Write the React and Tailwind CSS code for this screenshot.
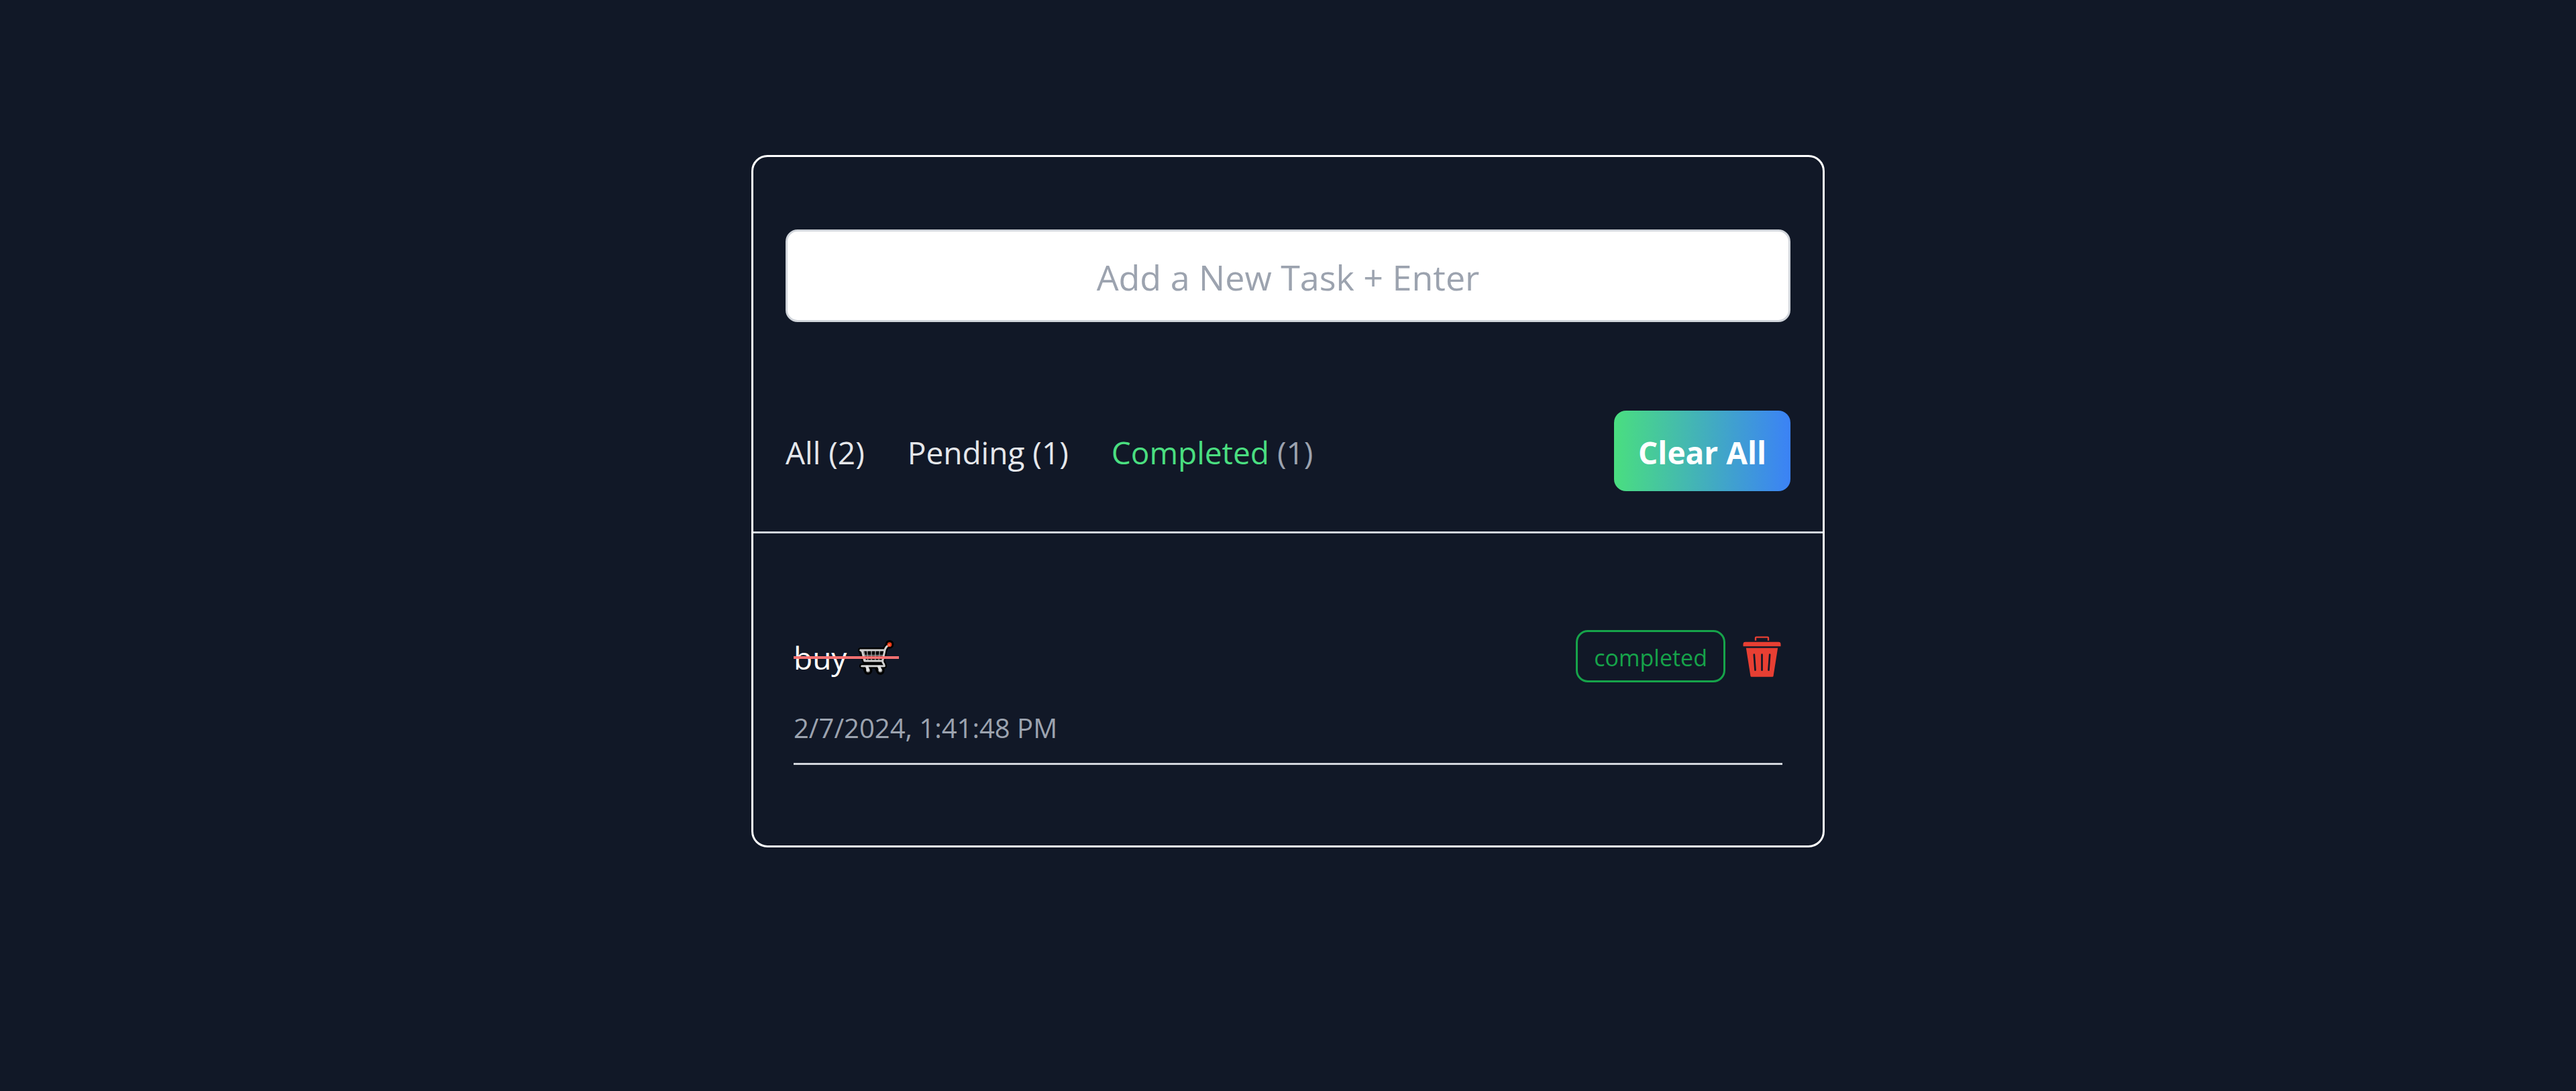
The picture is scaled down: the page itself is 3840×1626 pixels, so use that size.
import { useState } from "react";

function CartIcon() {
  const frame =
    "M200 71 Q187 77 183 93 L173 141 Q172 146 179 156 L181 164 H80 M74 93 H183 M74 93 L82 98 L92 141 H173";
  return (
    <svg
      viewBox="60 44 168 164"
      className="h-14 w-14"
      fill="none"
      strokeLinecap="round"
      strokeLinejoin="round"
      role="img"
      aria-label="shopping cart"
    >
      <g stroke="#000" strokeWidth="22">
        <path d={frame} />
        <path d="M76 95 L92 141 H173 L183 93 Z" fill="#000" />
        <path d="M204 67 H204.1" strokeWidth="38" />
        <path d="M103 170 L108 184 M157 170 L163 184" strokeWidth="38" />
      </g>
      <path
        d="M89 98 L97 137 M104 97 L107 137 M123 97 V137 M141 97 L140 137 M160 97 L156 137 M85 116 H176"
        stroke="#a3a3a3"
        strokeWidth="4"
      />
      <path d={frame} stroke="#cfcfcf" strokeWidth="9" />
      <path d="M103 168 L108 180 M157 168 L163 180" stroke="#e2e2e2" strokeWidth="13" />
      <circle cx="108" cy="184" r="9" fill="#8a8a8a" />
      <circle cx="163" cy="184" r="9" fill="#8a8a8a" />
      <circle cx="107" cy="181" r="7" fill="#e6e6e6" />
      <circle cx="162" cy="181" r="7" fill="#e6e6e6" />
      <circle cx="204" cy="68" r="10" fill="#f03a17" />
      <circle cx="202" cy="70" r="4" fill="#ff8a70" />
    </svg>
  );
}

function TrashIcon() {
  return (
    <svg viewBox="56 52 170 183" className="h-[61px] w-[57px]" aria-hidden="true">
      <path d="M112.500 72 V60 Q112.500 57 116 57 H166 Q169.500 57 169.500 60 V72" fill="none" stroke="#e83f33" strokeWidth="7" />
      <path d="M57 98 V88 Q57 78 67 78 H215 Q225 78 225 88 V98 Z" fill="#e83f33" />
      <path d="M70 105 H212 L192 231 Q191 234 188 234 H94 Q91 234 90 231 Z" fill="#e83f33" />
      <path d="M106 135 L111 204 M141 135 V204 M176 135 L171 204" stroke="#111827" strokeWidth="8" strokeLinecap="round" />
    </svg>
  );
}

const filters = [
  { id: "all", label: "All", count: 2 },
  { id: "pending", label: "Pending", count: 1 },
  { id: "completed", label: "Completed", count: 1 },
];

function Filters({ active, onSelect }) {
  return (
    <nav className="flex gap-16 pt-1">
      {filters.map(({ id, label, count }) => (
        <button
          key={id}
          type="button"
          onClick={() => onSelect(id)}
          className={
            active === id
              ? "cursor-pointer whitespace-nowrap text-[#9ca3af]"
              : "cursor-pointer whitespace-nowrap text-[#e5e7eb]"
          }
        >
          <span className={active === id ? "text-[#4ade80]" : ""}>{label}</span> ({count})
        </button>
      ))}
    </nav>
  );
}

function Task() {
  return (
    <li className="border-b-3 border-[#d1d5db] pb-5">
      <div className="flex items-center justify-between">
        <del className="relative flex items-center gap-4 pt-1 pr-1.5 text-white no-underline">
          buy
          <CartIcon />
          <span className="absolute inset-x-0 top-1/2 h-1 bg-[#f87171]" />
        </del>
        <div className="flex items-center gap-[26px] pr-0.5">
          <span className="rounded-[18px] border-3 border-[#16a34a] px-6 pt-[14px] pb-[10px] text-[34px] leading-[48px] text-[#16a34a]">
            completed
          </span>
          <button type="button" aria-label="Delete task" className="cursor-pointer">
            <TrashIcon />
          </button>
        </div>
      </div>
      <time className="mt-9 block text-[40px] leading-[64px] text-[#9ca3af]">2/7/2024, 1:41:48 PM</time>
    </li>
  );
}

export default function App() {
  const [active, setActive] = useState("completed");
  return (
    <main className="min-h-screen bg-[#111827] px-6 pt-[231px] pb-24 font-['Open_Sans',sans-serif] text-[46px] leading-[72px]">
      <div className="mx-auto w-full max-w-[1600px] rounded-3xl border-3 border-white">
        <header className="border-b-3 border-[#d1d5db] px-12 pt-[108px] pb-[60px]">
          <input
            type="text"
            aria-label="New task"
            placeholder="Add a New Task + Enter"
            className="block w-full rounded-[18px] border-3 border-[#d1d5db] bg-white px-9 pt-[26px] pb-[22px] text-center text-[52px] leading-[84px] text-gray-900 placeholder:text-[#9ca3af]"
          />
          <div className="mt-[132px] flex items-center justify-between">
            <Filters active={active} onSelect={setActive} />
            <button
              type="button"
              className="cursor-pointer rounded-[18px] bg-[linear-gradient(to_right,#4ade80,#3b82f6)] px-9 pt-[26px] pb-[22px] font-bold whitespace-nowrap text-white"
            >
              Clear All
            </button>
          </div>
        </header>
        <ul className="px-[60px] pt-36 pb-[120px]">
          <Task />
        </ul>
      </div>
    </main>
  );
}
